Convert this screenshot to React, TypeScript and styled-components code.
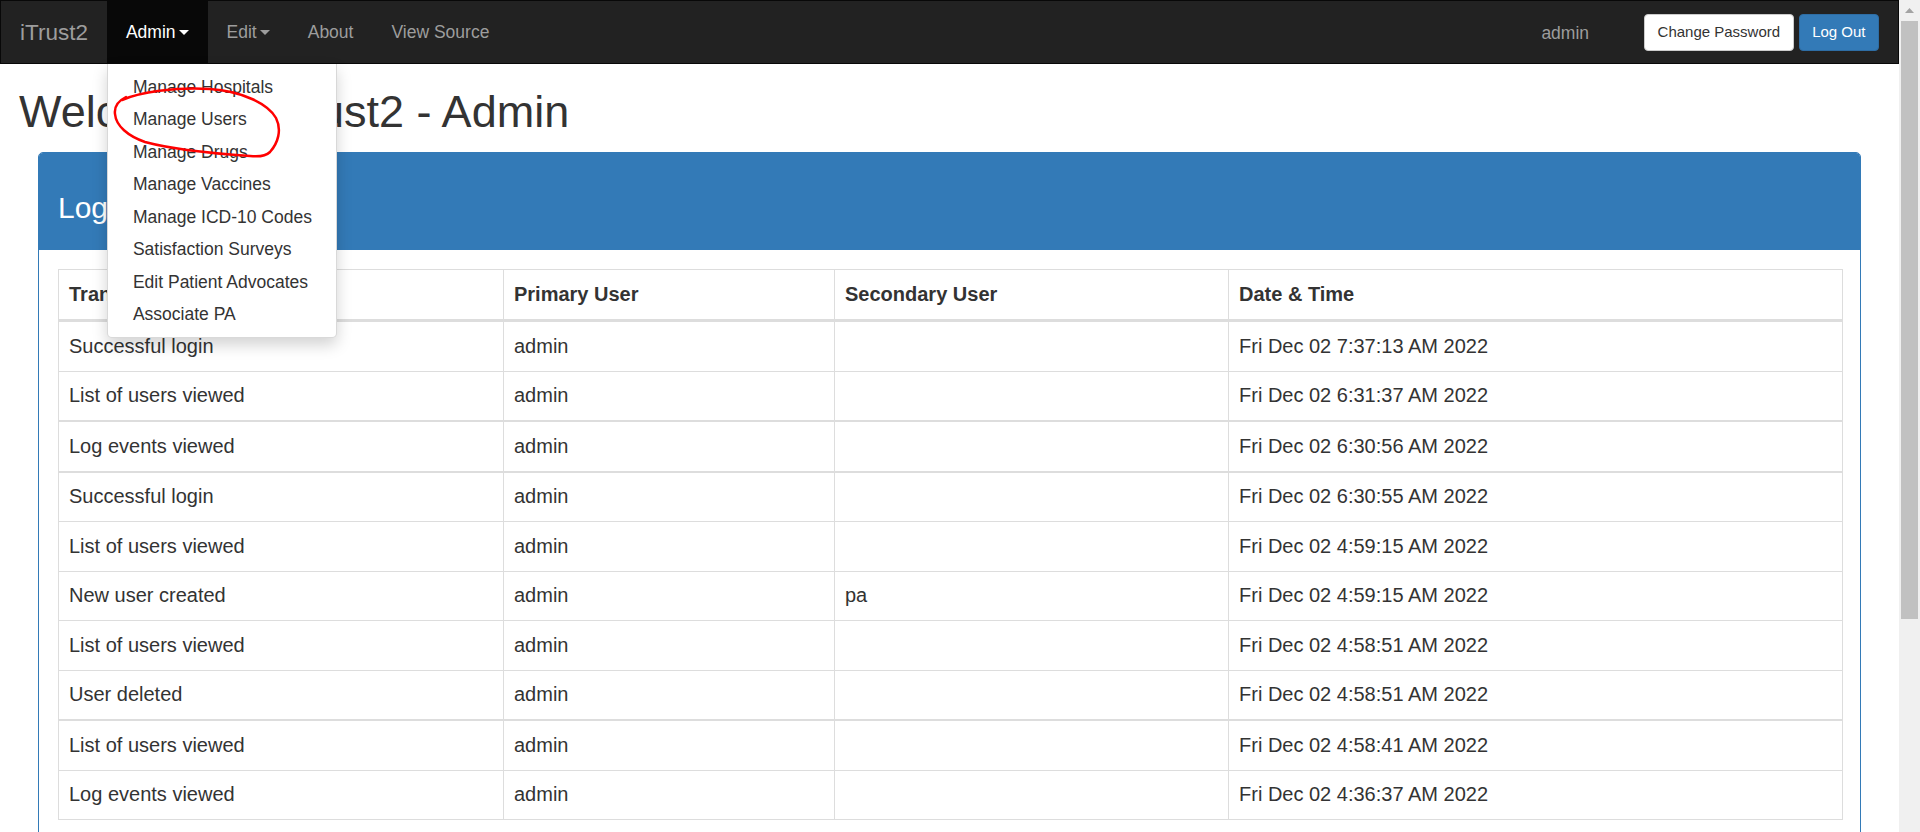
import React from 'react';
import styled, { createGlobalStyle } from 'styled-components';

const rows = [
  { type: 'Successful login', primary: 'admin', secondary: '', time: 'Fri Dec 02 7:37:13 AM 2022' },
  { type: 'List of users viewed', primary: 'admin', secondary: '', time: 'Fri Dec 02 6:31:37 AM 2022' },
  { type: 'Log events viewed', primary: 'admin', secondary: '', time: 'Fri Dec 02 6:30:56 AM 2022', thick: true },
  { type: 'Successful login', primary: 'admin', secondary: '', time: 'Fri Dec 02 6:30:55 AM 2022', thick: true },
  { type: 'List of users viewed', primary: 'admin', secondary: '', time: 'Fri Dec 02 4:59:15 AM 2022' },
  { type: 'New user created', primary: 'admin', secondary: 'pa', time: 'Fri Dec 02 4:59:15 AM 2022' },
  { type: 'List of users viewed', primary: 'admin', secondary: '', time: 'Fri Dec 02 4:58:51 AM 2022' },
  { type: 'User deleted', primary: 'admin', secondary: '', time: 'Fri Dec 02 4:58:51 AM 2022' },
  { type: 'List of users viewed', primary: 'admin', secondary: '', time: 'Fri Dec 02 4:58:41 AM 2022', thick: true },
  { type: 'Log events viewed', primary: 'admin', secondary: '', time: 'Fri Dec 02 4:36:37 AM 2022' },
];

const adminMenu = [
  'Manage Hospitals',
  'Manage Users',
  'Manage Drugs',
  'Manage Vaccines',
  'Manage ICD-10 Codes',
  'Satisfaction Surveys',
  'Edit Patient Advocates',
  'Associate PA',
];

export default function App() {
  return (
    <>
      <GlobalStyle />
      <Page>
        <Main>
          <Navbar>
            <Brand>iTrust2</Brand>
            <NavItem $active>
              Admin
              <Caret />
              <DropdownMenu>
                {adminMenu.map(item => (
                  <MenuItem key={item}>{item}</MenuItem>
                ))}
              </DropdownMenu>
            </NavItem>
            <NavItem>
              Edit
              <Caret />
            </NavItem>
            <NavItem>About</NavItem>
            <NavItem>View Source</NavItem>
            <Spacer />
            <NavText>admin</NavText>
            <ButtonGroup>
              <Button>Change Password</Button>
              <Button $primary>Log Out</Button>
            </ButtonGroup>
          </Navbar>

          <Content>
            <Title>Welcome to iTrust2 - Admin</Title>
            <Panel>
              <PanelHeading>
                <PanelTitle>Log Entries</PanelTitle>
              </PanelHeading>
              <PanelBody>
                <Table>
                  <colgroup>
                    <Col $width={445} />
                    <Col $width={331} />
                    <Col $width={394} />
                    <Col $width={614} />
                  </colgroup>
                  <thead>
                    <tr>
                      <Th>Transaction Type</Th>
                      <Th>Primary User</Th>
                      <Th>Secondary User</Th>
                      <Th>Date &amp; Time</Th>
                    </tr>
                  </thead>
                  <tbody>
                    {rows.map((r, i) => (
                      <Row key={i} $thick={!!r.thick}>
                        <Td>{r.type}</Td>
                        <Td>{r.primary}</Td>
                        <Td>{r.secondary}</Td>
                        <Td>{r.time}</Td>
                      </Row>
                    ))}
                  </tbody>
                </Table>
              </PanelBody>
            </Panel>
          </Content>

          {/* hand-drawn red circle around "Manage Users" */}
          <Annotation width="200" height="90" viewBox="0 0 200 90">
            <path
              d="M 22 20 C 40 12, 75 7, 110 9 C 142 11, 168 24, 176 38 C 182 50, 178 63, 170 72 C 166 76, 160 77, 150 76 C 120 74, 75 70, 45 62 C 28 56, 16 46, 15 34 C 14 26, 18 21, 26 17"
              fill="none"
              stroke="#f00"
              strokeWidth="2.5"
              strokeLinecap="round"
            />
          </Annotation>
        </Main>

        <ScrollTrack>
          <ScrollArrow>
            <svg width="9" height="5" viewBox="0 0 9 5">
              <path d="M0 5 L4.5 0 L9 5 Z" fill="#a3a3a3" />
            </svg>
          </ScrollArrow>
          <ScrollThumb />
        </ScrollTrack>
      </Page>
    </>
  );
}

const GlobalStyle = createGlobalStyle`
  body {
    margin: 0;
    font-family: "Liberation Sans", Arial, Helvetica, sans-serif;
    color: #333;
    background: #fff;
    overflow: hidden;
  }
  * {
    box-sizing: border-box;
  }
`;

const Page = styled.div`
  display: flex;
  height: 832px;
  overflow: hidden;
`;

const Main = styled.div`
  flex: 1;
  min-width: 0;
  position: relative;
`;

const Navbar = styled.nav`
  display: flex;
  align-items: stretch;
  height: 64px;
  background-color: #222;
  border: 1px solid #080808;
  padding-right: 19px;
  font-size: 17.5px;
`;

const Brand = styled.a`
  display: flex;
  align-items: center;
  padding: 1px 19px 0;
  font-size: 22.5px;
  color: #9d9d9d;
`;

const NavItem = styled.div<{ $active?: boolean }>`
  position: relative;
  display: flex;
  align-items: center;
  padding: 1px 19px 0;
  color: ${props => (props.$active ? '#fff' : '#9d9d9d')};
  background-color: ${props => (props.$active ? '#080808' : 'transparent')};
`;

const Caret = styled.span`
  display: inline-block;
  width: 0;
  height: 0;
  margin-left: 3px;
  border-top: 5px solid currentColor;
  border-left: 5px solid transparent;
  border-right: 5px solid transparent;
`;

const DropdownMenu = styled.ul`
  position: absolute;
  top: calc(100% + 1px);
  left: 0;
  z-index: 10;
  width: 230px;
  margin: 0;
  padding: 7px 0 6px;
  list-style: none;
  background-color: #fff;
  border: 1px solid rgba(0, 0, 0, 0.15);
  border-top: none;
  border-radius: 0 0 5px 5px;
  box-shadow: 0 7px 15px rgba(0, 0, 0, 0.175);
`;

const MenuItem = styled.li`
  padding: 3.75px 25px;
  line-height: 25px;
  font-size: 17.5px;
  color: #333;
  white-space: nowrap;
`;

const Spacer = styled.div`
  flex: 1;
`;

const NavText = styled.span`
  display: flex;
  align-items: center;
  color: #9d9d9d;
  margin-right: 55px;
  padding-top: 3px;
`;

const ButtonGroup = styled.div`
  display: flex;
  align-items: center;
  gap: 5px;
  padding-top: 1px;
`;

const Button = styled.button<{ $primary?: boolean }>`
  height: 37px;
  padding: 0 12.5px;
  font-family: inherit;
  font-size: 15px;
  line-height: 22.5px;
  border-radius: 4px;
  border: 1px solid ${props => (props.$primary ? '#2e6da4' : '#ccc')};
  background-color: ${props => (props.$primary ? '#337ab7' : '#fff')};
  color: ${props => (props.$primary ? '#fff' : '#333')};
`;

const Content = styled.div`
  padding: 0 19px;
`;

const Title = styled.h1`
  margin: 23px 0 15.5px;
  font-size: 45px;
  font-weight: 500;
  line-height: 1.1;
`;

const Panel = styled.div`
  margin: 0 19px;
  border: 1px solid #337ab7;
  border-radius: 5px;
  background-color: #fff;
`;

const PanelHeading = styled.div`
  background-color: #337ab7;
  color: #fff;
  padding: 12.5px 19px 13.5px;
  border-radius: 4px 4px 0 0;
`;

const PanelTitle = styled.h3`
  margin: 25px 0 12.5px;
  font-size: 30px;
  font-weight: 500;
  line-height: 1.1;
`;

const PanelBody = styled.div`
  padding: 19px;
`;

const Table = styled.table`
  width: 100%;
  table-layout: fixed;
  border-collapse: collapse;
  border: 1px solid #ddd;
  font-size: 20px;
`;

const Col = styled.col<{ $width: number }>`
  width: ${props => props.$width}px;
`;

const Th = styled.th`
  padding: 10px 10px 11px;
  line-height: 28.5px;
  text-align: left;
  font-weight: bold;
  border: 1px solid #ddd;
  border-bottom: 3px solid #ddd;
`;

const Td = styled.td`
  padding: 9.5px 10px 10.5px;
  line-height: 28.5px;
  border: 1px solid #ddd;
  vertical-align: top;
`;

const Row = styled.tr<{ $thick: boolean }>`
  td {
    border-top-width: ${props => (props.$thick ? '2px' : '1px')};
  }
`;

const Annotation = styled.svg`
  position: absolute;
  left: 100px;
  top: 80px;
  z-index: 20;
  pointer-events: none;
`;

const ScrollTrack = styled.div`
  width: 21px;
  flex-shrink: 0;
  display: flex;
  flex-direction: column;
  align-items: center;
  background-color: #f0f0f0;
`;

const ScrollArrow = styled.div`
  height: 21px;
  display: flex;
  align-items: center;
  justify-content: center;
`;

const ScrollThumb = styled.div`
  width: 17px;
  height: 598px;
  background-color: #c1c1c1;
`;
